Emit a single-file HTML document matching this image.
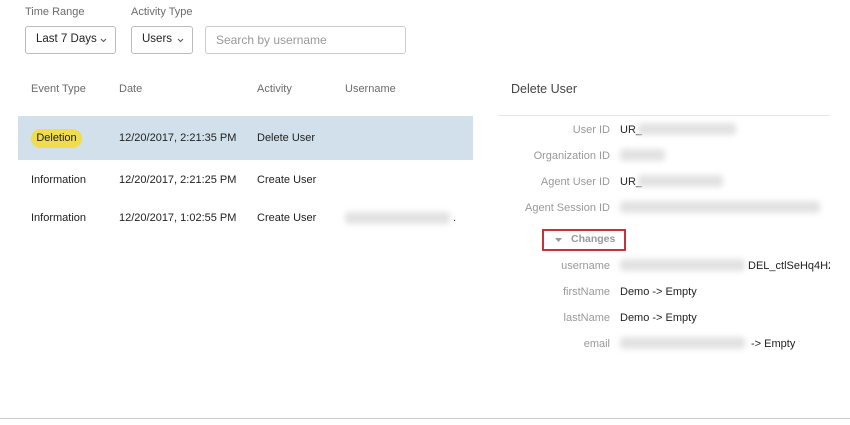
<!DOCTYPE html><html><head><style>
body{margin:0;width:850px;height:425px;background:#fff;font-family:"Liberation Sans",sans-serif;font-size:11px;color:#222;position:relative;overflow:hidden}
.a{position:absolute;white-space:nowrap}
.lbl{color:#6b6b6b;font-size:11px}
.box{position:absolute;border:1px solid #bbb;border-radius:3px;background:#fff;box-sizing:border-box}
.bl{position:absolute;background:#e2e2e2;filter:blur(3px);height:12px;border-radius:3px}
.k{position:absolute;right:220px;color:#999;text-align:right}
svg{position:absolute}
</style></head><body>
<div class="a lbl" style="left:25px;top:6px">Time Range</div>
<div class="a lbl" style="left:131px;top:6px">Activity Type</div>
<div class="box" style="left:25px;top:26px;width:91px;height:28px"></div>
<div class="a" style="left:36px;top:33px;font-size:11.5px">Last 7 Days</div>
<svg style="left:100px;top:38px" width="7" height="5"><path d="M1 1L3.5 3.5L6 1" stroke="#555" fill="none"/></svg>
<div class="box" style="left:131px;top:26px;width:62px;height:28px"></div>
<div class="a" style="left:142px;top:33px;font-size:11.5px">Users</div>
<svg style="left:177px;top:38px" width="7" height="5"><path d="M1 1L3.5 3.5L6 1" stroke="#555" fill="none"/></svg>
<div class="box" style="left:205px;top:26px;width:201px;height:28px;border-color:#ccc"></div>
<div class="a" style="left:216px;top:33px;font-size:12px;color:#999">Search by username</div>
<div class="a lbl" style="left:31px;top:83px">Event Type</div>
<div class="a lbl" style="left:119px;top:83px">Date</div>
<div class="a lbl" style="left:257px;top:83px">Activity</div>
<div class="a lbl" style="left:345px;top:83px">Username</div>
<div class="a" style="left:18px;top:116px;width:455px;height:44px;background:#d1e0ea"></div>
<div class="a" style="left:31px;top:129px;width:51px;height:19px;background:#f0dc4c;border-radius:10px"></div>
<div class="a" style="left:31px;top:132px;width:51px;text-align:center;font-size:11px">Deletion</div>
<div class="a" style="left:119px;top:132px;font-size:11px">12/20/2017, 2:21:35 PM</div>
<div class="a" style="left:257px;top:132px;font-size:11px">Delete User</div>
<div class="a" style="left:31px;top:174px;font-size:11px">Information</div>
<div class="a" style="left:119px;top:174px;font-size:11px">12/20/2017, 2:21:25 PM</div>
<div class="a" style="left:257px;top:174px;font-size:11px">Create User</div>
<div class="a" style="left:31px;top:212px;font-size:11px">Information</div>
<div class="a" style="left:119px;top:212px;font-size:11px">12/20/2017, 1:02:55 PM</div>
<div class="a" style="left:257px;top:212px;font-size:11px">Create User</div>
<div class="bl" style="left:345px;top:212px;width:105px"></div>
<div class="a" style="left:453px;top:212px">.</div>
<div class="a" style="left:511px;top:82px;font-size:12.5px;color:#444">Delete User</div>
<div class="a" style="left:498px;top:115px;width:332px;height:1px;background:#e6e6e6"></div>
<div style="position:absolute;left:490px;top:0;width:340px;height:425px;overflow:hidden;font-size:11px">
<div class="k" style="top:124px">User ID</div><div class="a" style="left:130px;top:124px">UR_</div><div class="bl" style="left:148px;top:123px;width:98px"></div>
<div class="k" style="top:150px">Organization ID</div><div class="bl" style="left:130px;top:149px;width:45px"></div>
<div class="k" style="top:176px">Agent User ID</div><div class="a" style="left:130px;top:176px">UR_</div><div class="bl" style="left:148px;top:175px;width:85px"></div>
<div class="k" style="top:202px">Agent Session ID</div><div class="bl" style="left:130px;top:201px;width:200px"></div>
<div class="k" style="top:260px">username</div><div class="bl" style="left:130px;top:259px;width:125px"></div><div class="a" style="left:258px;top:260px">DEL_ctlSeHq4H2C</div>
<div class="k" style="top:286px">firstName</div><div class="a" style="left:130px;top:286px">Demo -&gt; Empty</div>
<div class="k" style="top:312px">lastName</div><div class="a" style="left:130px;top:312px">Demo -&gt; Empty</div>
<div class="k" style="top:338px">email</div><div class="bl" style="left:130px;top:337px;width:125px"></div><div class="a" style="left:261px;top:338px">-&gt; Empty</div>
</div>
<div class="a" style="left:542px;top:229px;width:80px;height:18px;border:2px solid #c8323c"></div>
<svg style="left:555px;top:238px" width="8" height="5"><path d="M0 0H7L3.5 4Z" fill="#999"/></svg>
<div class="a" style="left:571px;top:233px;color:#999;font-size:10.5px;font-weight:bold">Changes</div>
<div class="a" style="left:0;top:418px;width:850px;height:1px;background:#ccc"></div>
</body></html>
